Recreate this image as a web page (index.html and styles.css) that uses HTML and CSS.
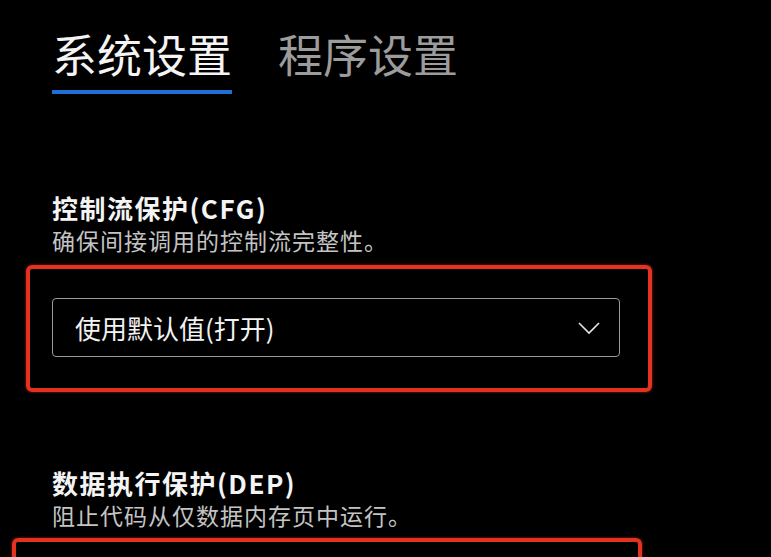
FILE: index.html
```html
<!DOCTYPE html>
<html lang="zh-CN">

<head>
  <meta charset="UTF-8">
  <meta name="viewport" content="width=device-width, initial-scale=1.0">
  <title>Exploit protection</title>
  <link rel="stylesheet" href="styles.css">
</head>

<body>
  <div class="page">
    <div class="tabs">
      <span class="tab active">系统设置</span>
      <span class="tab">程序设置</span>
    </div>

    <div class="setting first">
      <h3 class="title">控制流保护(CFG)</h3>
      <p class="desc">确保间接调用的控制流完整性。</p>
      <div class="mark">
        <div class="select">
          <span>使用默认值(打开)</span>
          <svg class="chev" width="22" height="14" viewBox="0 0 22 14">
            <path d="M1 2 L11 12 L21 2" fill="none" stroke="#e6e6e6" stroke-width="1.6" />
          </svg>
        </div>
      </div>
    </div>

    <div class="setting second">
      <h3 class="title">数据执行保护(DEP)</h3>
      <p class="desc">阻止代码从仅数据内存页中运行。</p>
      <div class="mark mark-cut"></div>
    </div>
  </div>
</body>

</html>
```

FILE: styles.css
```css
* {
  padding: 0;
  margin: 0;
  box-sizing: border-box;
}

html,
body {
  height: 557px;
  overflow: hidden;
  background-color: #000;
}

body {
  font-family: "Noto Sans CJK SC", "Noto Sans", sans-serif;
  color: #f2f2f2;
}

.page {
  padding-left: 52px;
}

/* 顶部标签 */
.tabs {
  display: flex;
  gap: 46px;
  padding-top: 26px;
}

.tab {
  font-size: 45px;
  line-height: 56px;
  padding-bottom: 8px;
  color: #9c9c9c;
  border-bottom: 4px solid transparent;
}

.tab.active {
  color: #f4f4f4;
  border-bottom-color: #1f6fd6;
}

.setting.first {
  margin-top: 97px;
}

.setting.second {
  margin-top: 74px;
}

.title {
  font-size: 26px;
  font-weight: 700;
  line-height: 34px;
  letter-spacing: 1.5px;
  color: #f4f4f4;
}

.desc {
  font-size: 23px;
  line-height: 30px;
  letter-spacing: 1px;
  color: #c4c4c4;
}

/* 红色标注框 */
.mark {
  margin-left: -26px;
  width: 626px;
  padding: 29px 28px 31px 22px;
  border: 4px solid #e3321f;
  border-radius: 6px;
  box-shadow: 0 0 3px rgba(227, 50, 31, 0.7);
  margin-top: 10px;
}

.mark-cut {
  margin-left: -40px;
  width: 630px;
  height: 80px;
  margin-top: 8px;
}

.select {
  display: flex;
  align-items: center;
  justify-content: space-between;
  height: 59px;
  padding: 0 19px 0 22px;
  border: 1px solid #9a9a9a;
  border-radius: 4px;
  font-size: 26px;
  color: #f2f2f2;
}

.chev {
  display: block;
}
```
